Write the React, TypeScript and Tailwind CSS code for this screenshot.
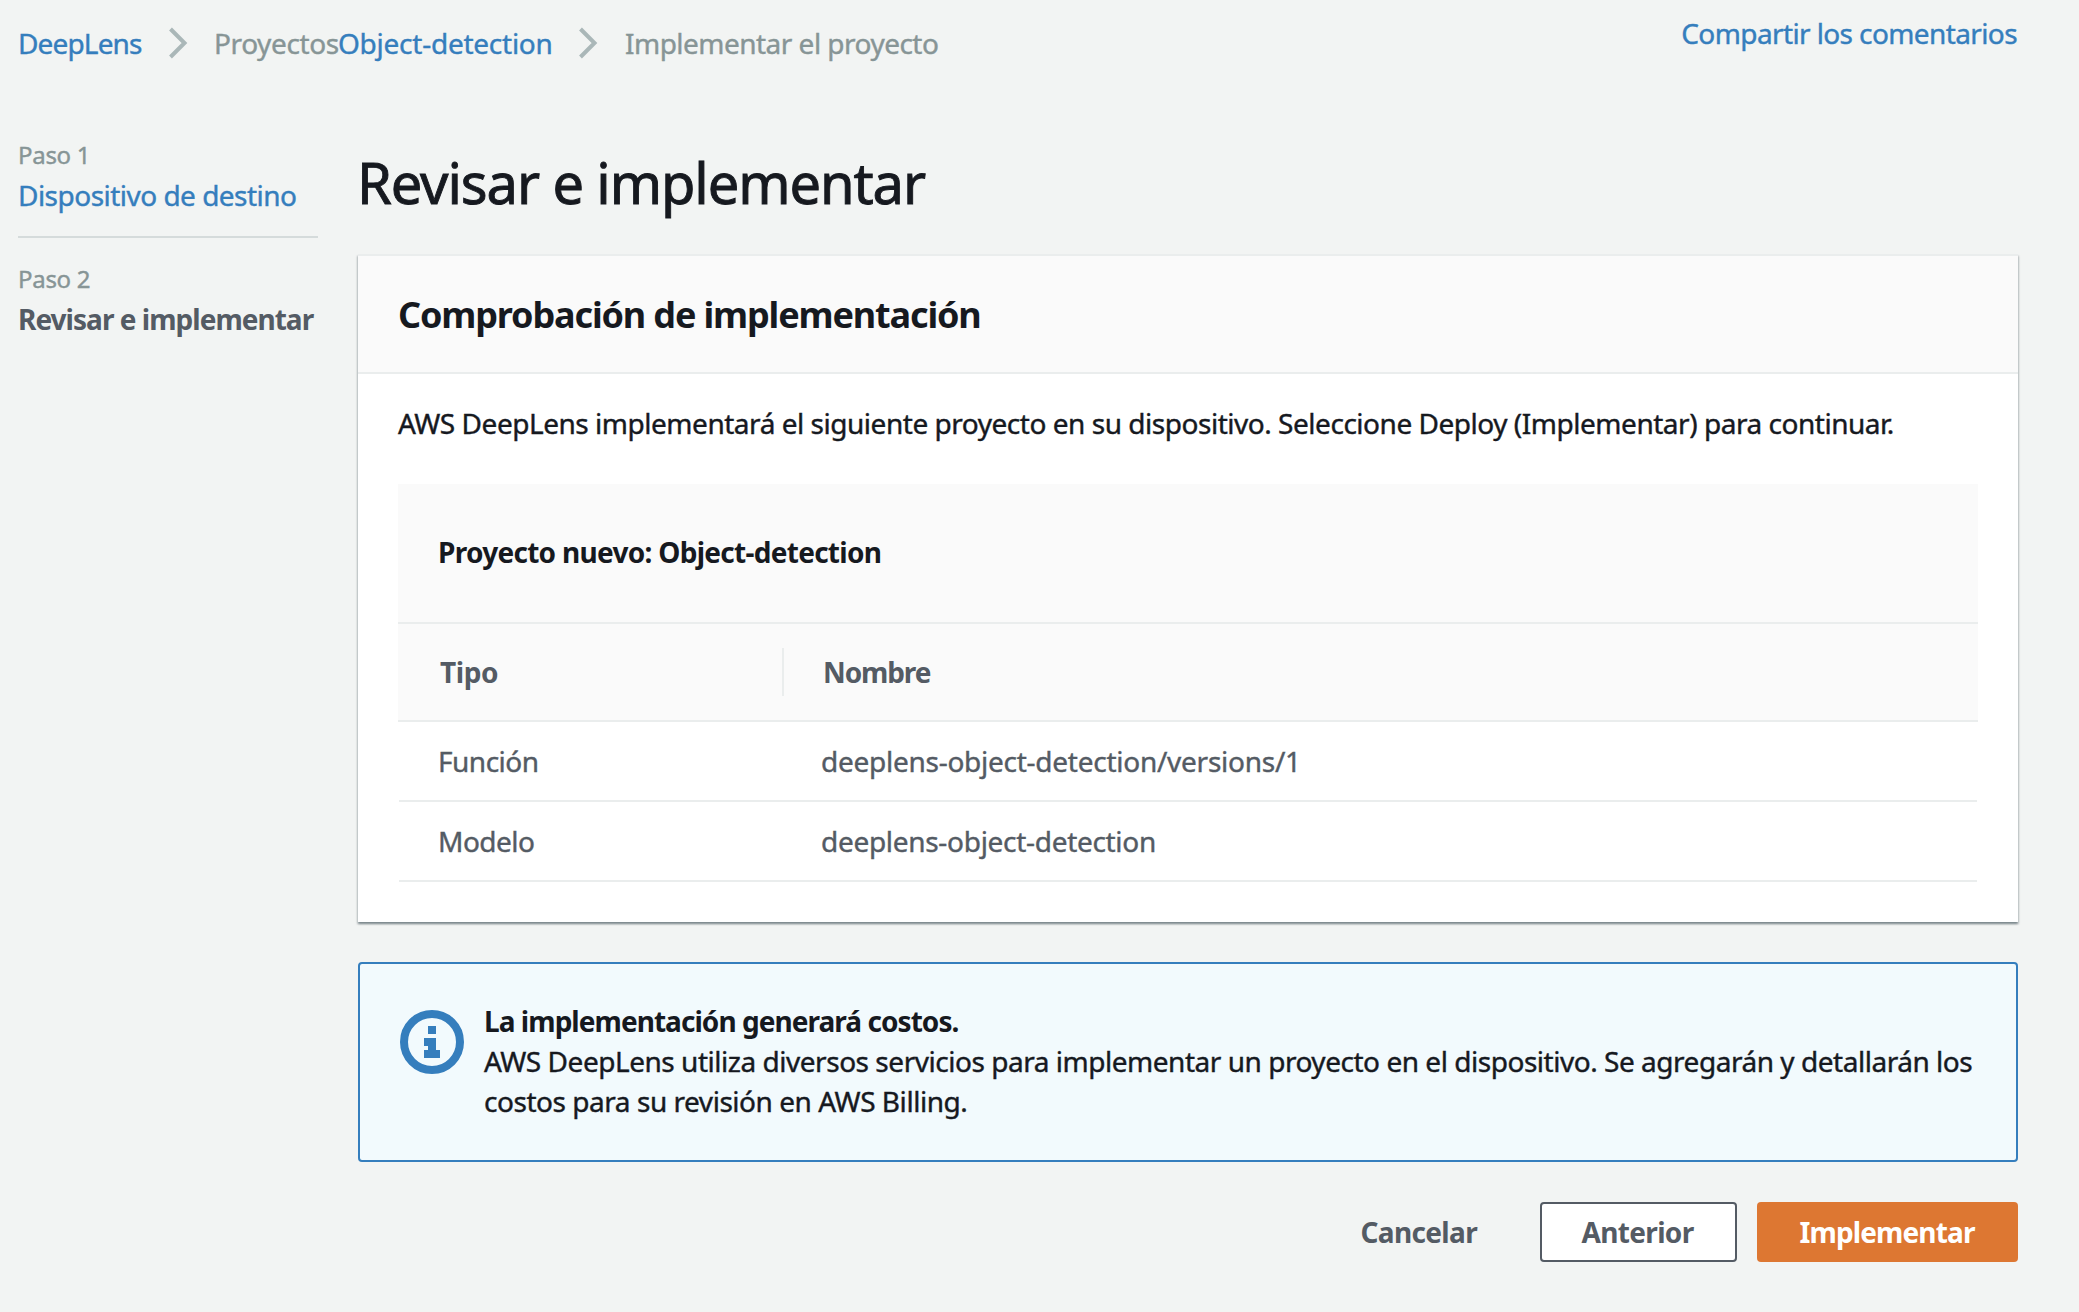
import type { ReactNode } from 'react';

function Chevron() {
  return (
    <svg width="20" height="32" viewBox="0 0 20 32" fill="none" className="shrink-0">
      <path d="M2.5 2 L16.5 16 L2.5 30" stroke="#aab7b8" strokeWidth="4" />
    </svg>
  );
}

function InfoIcon() {
  return (
    <svg width="64" height="64" viewBox="0 0 64 64" fill="none" className="shrink-0">
      <circle cx="32" cy="32" r="28" stroke="#357ebd" strokeWidth="8" />
      <path d="M28 16h8v8h-8z M24 28h12v12h4v8H24v-8h4v-4h-4z" fill="#357ebd" />
    </svg>
  );
}

function Step({ label, children }: { label: string; children: ReactNode }) {
  return (
    <li className="pl-px">
      <div className="pt-px text-[24px] leading-[32px] tracking-[-0.3px] text-[#879596]">{label}</div>
      <div className="mt-1">{children}</div>
    </li>
  );
}

const rows = [
  { type: 'Función', name: 'deeplens-object-detection/versions/1', tracking: 'tracking-[-0.26px]' },
  { type: 'Modelo', name: 'deeplens-object-detection', tracking: 'tracking-[-0.3px]' },
];

export default function App() {
  return (
    <div className="h-[1312px] w-[2079px] overflow-hidden bg-[#f2f4f3] pl-[17px] pr-[61px] font-['Noto_Sans',sans-serif] text-[28px] leading-[40px] text-[#16191f] [-webkit-text-stroke:0.4px]">
      <header className="flex h-[138px] items-start justify-between">
        <nav className="mt-[23px] flex h-10 items-center whitespace-nowrap text-[#879596]">
          <a className="w-[151px] pl-px tracking-[-0.85px] text-[#357ebd]">DeepLens</a>
          <Chevron />
          <span className="ml-[25px] w-[125px] pl-px tracking-[-0.4px]">Proyectos</span>
          <a className="w-[240px] tracking-[-0.25px] text-[#357ebd]">Object-detection</a>
          <Chevron />
          <span className="ml-[27px] tracking-[-0.52px]">Implementar el proyecto</span>
        </nav>
        <a className="mt-[13px] mr-px whitespace-nowrap tracking-[-0.61px] text-[#357ebd]">Compartir los comentarios</a>
      </header>

      <div className="flex">
        <ol className="mr-10 w-[301px] shrink-0 whitespace-nowrap">
          <Step label="Paso 1">
            <a className="tracking-[-0.52px] text-[#357ebd]">Dispositivo de destino</a>
          </Step>
          <div className="ml-px mt-[21px] mb-6 h-[2px] bg-[#d5dbdb]" />
          <Step label="Paso 2">
            <span className="font-bold tracking-[-0.97px] text-[#545b64] [-webkit-text-stroke:0]">Revisar e implementar</span>
          </Step>
        </ol>

        <main className="w-[1660px] pt-2">
          <h1 className="-ml-px text-[56px] leading-[72px] tracking-[-1.09px] [-webkit-text-stroke:0.9px]">Revisar e implementar</h1>

          <section className="mt-9 border-t-2 border-[#eaeded] bg-white shadow-[0_2px_2px_0_rgba(0,28,36,0.3),1px_2px_2px_0_rgba(0,28,36,0.15),-1px_2px_2px_0_rgba(0,28,36,0.15)]">
            <div className="border-b-2 border-[#eaeded] bg-[#fafafa] px-10 pt-[37px] pb-[35px]">
              <h2 className="text-[36px] font-bold leading-[44px] tracking-[-1.15px] [-webkit-text-stroke:0]">Comprobación de implementación</h2>
            </div>
            <div className="px-10 pt-[29px] pb-10">
              <p className="whitespace-nowrap tracking-[-0.47px]">
                AWS DeepLens implementará el siguiente proyecto en su dispositivo. Seleccione Deploy (Implementar) para continuar.
              </p>
              <div className="mt-[41px]">
                <h3 className="h-[140px] border-b-2 border-[#eaeded] bg-[#fafafa] pt-12 pl-10 font-bold tracking-[-0.71px] [-webkit-text-stroke:0]">
                  Proyecto nuevo: Object-detection
                </h3>
                <div className="flex h-[98px] items-center border-b-2 border-[#eaeded] bg-[#fafafa] font-bold text-[#545b64] [-webkit-text-stroke:0]">
                  <div className="flex h-12 w-[386px] items-center border-r-2 border-[#eaeded] pl-[42px] tracking-[-0.41px]">Tipo</div>
                  <div className="pl-[39px] tracking-[-1.1px]">Nombre</div>
                </div>
                {rows.map((row) => (
                  <div key={row.type} className="mx-px flex h-20 items-center border-b-2 border-[#eaeded] text-[#545b64]">
                    <div className="w-[383px] pl-[39px] tracking-[-0.5px]">{row.type}</div>
                    <div className={`pl-[39px] ${row.tracking}`}>{row.name}</div>
                  </div>
                ))}
              </div>
            </div>
          </section>

          <section className="mt-10 flex h-[200px] rounded-[4px] border-2 border-[#357ebd] bg-[#f2fafd] pt-[37px] pl-10">
            <div className="mt-[9px] mr-5">
              <InfoIcon />
            </div>
            <div className="whitespace-nowrap tracking-[-0.47px]">
              <div className="font-bold tracking-[-0.95px] [-webkit-text-stroke:0]">La implementación generará costos.</div>
              <p>
                AWS DeepLens utiliza diversos servicios para implementar un proyecto en el dispositivo. Se agregarán y detallarán los
                <br />
                <span className="tracking-[-0.46px]">costos para su revisión en AWS Billing.</span>
              </p>
            </div>
          </section>

          <div className="mt-10 flex h-[60px] justify-end font-bold text-[#545b64] [-webkit-text-stroke:0]">
            <button className="mr-[63px] tracking-[-0.65px]">Cancelar</button>
            <button className="mr-5 w-[197px] rounded-[4px] border-2 border-[#545b64] bg-white pr-[2px] tracking-[-0.65px]">Anterior</button>
            <button className="w-[261px] rounded-[4px] bg-[#dd7732] pr-px tracking-[-0.86px] text-white">Implementar</button>
          </div>
        </main>
      </div>
    </div>
  );
}
